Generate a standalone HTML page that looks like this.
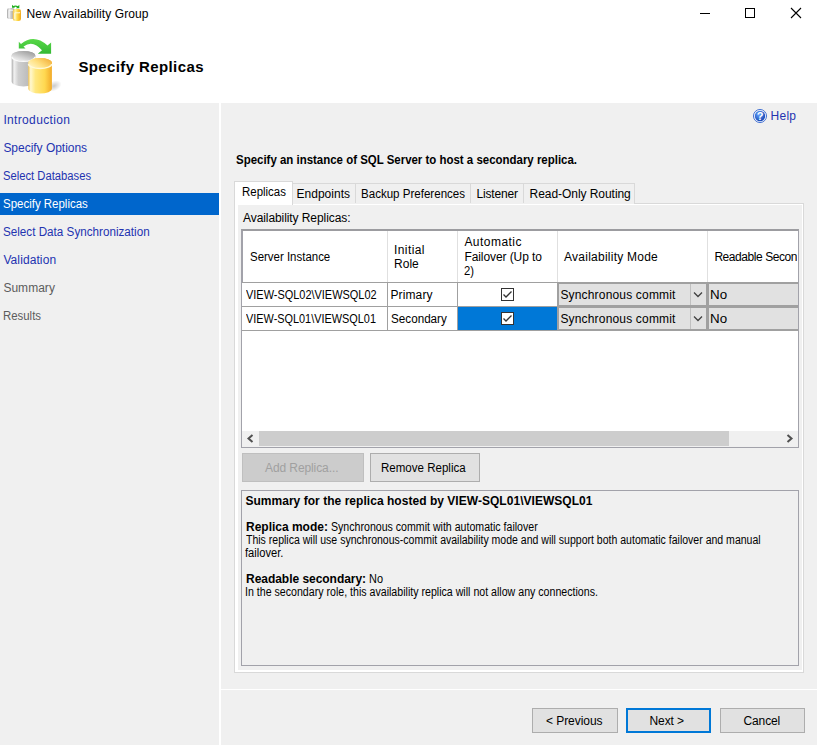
<!DOCTYPE html>
<html><head><meta charset="utf-8">
<style>
html,body{margin:0;padding:0;}
body{width:820px;height:749px;position:relative;overflow:hidden;background:#fff;font-family:"Liberation Sans",sans-serif;color:#000;}
.t{position:absolute;white-space:nowrap;}
.r{position:absolute;box-sizing:border-box;}
</style></head><body>
<!-- left nav panel -->
<div class="r" style="left:0;top:103px;width:219px;height:642px;background:#f0f0f0"></div>
<div class="r" style="left:0;top:193px;width:219px;height:22px;background:#0066cc"></div>
<!-- right panel -->
<div class="r" style="left:221px;top:103px;width:596px;height:586px;background:#f0f0f0"></div>
<div class="r" style="left:221px;top:690px;width:596px;height:55px;background:#f0f0f0"></div>
<!-- tab control page -->
<div class="r" style="left:234px;top:203px;width:570px;height:470px;border:1px solid #d9d9d9;background:#fff"></div>
<div class="r" style="left:238px;top:205px;width:564px;height:465px;background:#f0f0f0"></div>
<!-- inactive tabs -->
<div class="r" style="left:292px;top:183px;width:343px;height:21px;border:1px solid #d9d9d9;border-bottom:none;background:#f0f0f0"></div>
<div class="r" style="left:355px;top:184px;width:1px;height:19px;background:#d9d9d9"></div>
<div class="r" style="left:470px;top:184px;width:1px;height:19px;background:#d9d9d9"></div>
<div class="r" style="left:523px;top:184px;width:1px;height:19px;background:#d9d9d9"></div>
<!-- active tab -->
<div class="r" style="left:234px;top:181px;width:59px;height:24px;border:1px solid #d9d9d9;border-bottom:none;background:#fff"></div>
<!-- grid -->
<div class="r" style="left:241px;top:229px;width:558px;height:219px;border:1px solid #a2a2aa;border-top:2px solid #9c9ca0;background:#fff"></div>
<div class="r" style="left:242px;top:231px;width:1px;height:51px;background:#a2a2aa"></div>
<!-- header col separators -->
<div class="r" style="left:387px;top:231px;width:1px;height:51px;background:#e0e0e0"></div>
<div class="r" style="left:457px;top:231px;width:1px;height:51px;background:#e0e0e0"></div>
<div class="r" style="left:557px;top:231px;width:1px;height:51px;background:#e0e0e0"></div>
<div class="r" style="left:707px;top:231px;width:1px;height:51px;background:#e0e0e0"></div>
<div class="r" style="left:387px;top:282px;width:1px;height:49px;background:#a0a0a0"></div>
<div class="r" style="left:457px;top:282px;width:1px;height:49px;background:#a0a0a0"></div>
<div class="r" style="left:242px;top:282px;width:556px;height:1px;background:#a0a0a0"></div>
<div class="r" style="left:242px;top:306px;width:316px;height:1px;background:#a0a0a0"></div>
<div class="r" style="left:242px;top:330px;width:556px;height:1px;background:#a0a0a0"></div>
<!-- selected cell -->
<div class="r" style="left:458px;top:307px;width:99px;height:23px;background:#0078d7"></div>
<!-- combo cells -->
<div class="r" style="left:557px;top:282px;width:241px;height:49px;background:#a0a0a0"></div>
<div class="r" style="left:559px;top:284px;width:147px;height:21px;background:#e1e1e1"></div>
<div class="r" style="left:709px;top:284px;width:89px;height:21px;background:#e1e1e1"></div>
<div class="r" style="left:559px;top:308px;width:147px;height:21px;background:#e1e1e1"></div>
<div class="r" style="left:709px;top:308px;width:89px;height:21px;background:#e1e1e1"></div>
<div class="r" style="left:690px;top:284px;width:1px;height:21px;background:#c0c0c0"></div>
<div class="r" style="left:690px;top:308px;width:1px;height:21px;background:#c0c0c0"></div>
<svg class="r" style="left:693px;top:291px" width="10" height="7"><path d="M1 1.5 L5 5.5 L9 1.5" fill="none" stroke="#404040" stroke-width="1.3"/></svg>
<svg class="r" style="left:693px;top:315px" width="10" height="7"><path d="M1 1.5 L5 5.5 L9 1.5" fill="none" stroke="#404040" stroke-width="1.3"/></svg>
<!-- checkboxes -->
<div class="r" style="left:501px;top:288px;width:13px;height:13px;border:1px solid #333;background:#fff"></div>
<svg class="r" style="left:503px;top:291px" width="9" height="7"><path d="M0.5 3.5 L3 6 L8.5 0.5" fill="none" stroke="#333" stroke-width="1.3"/></svg>
<div class="r" style="left:501px;top:312px;width:13px;height:13px;border:1px solid #333;background:#fff"></div>
<svg class="r" style="left:503px;top:315px" width="9" height="7"><path d="M0.5 3.5 L3 6 L8.5 0.5" fill="none" stroke="#333" stroke-width="1.3"/></svg>
<!-- scrollbar -->
<div class="r" style="left:242px;top:431px;width:556px;height:16px;background:#f0f0f0"></div>
<div class="r" style="left:259px;top:431px;width:470px;height:15px;background:#cdcdcd"></div>
<svg class="r" style="left:246px;top:434px" width="9" height="10"><path d="M6.5 1 L2.5 4.5 L6.5 8" fill="none" stroke="#505050" stroke-width="2"/></svg>
<svg class="r" style="left:785px;top:434px" width="9" height="10"><path d="M2.5 1 L6.5 4.5 L2.5 8" fill="none" stroke="#505050" stroke-width="2"/></svg>
<!-- buttons -->
<div class="r" style="left:242px;top:453px;width:122px;height:29px;border:1px solid #bfbfbf;background:#cccccc"></div>
<div class="r" style="left:370px;top:453px;width:110px;height:29px;border:1px solid #adadad;background:#e1e1e1"></div>
<!-- summary box -->
<div class="r" style="left:241px;top:490px;width:558px;height:176px;border:1px solid #a2a2aa;background:#f0f0f0"></div>
<!-- bottom buttons -->
<div class="r" style="left:532px;top:708px;width:86px;height:25px;border:1px solid #adadad;background:#e1e1e1"></div>
<div class="r" style="left:626px;top:708px;width:85px;height:25px;border:2px solid #0078d7;background:#e1e1e1"></div>
<div class="r" style="left:720px;top:708px;width:85px;height:25px;border:1px solid #adadad;background:#e1e1e1"></div>
<!-- window buttons -->
<div class="r" style="left:700px;top:13px;width:10px;height:1px;background:#000"></div>
<div class="r" style="left:745px;top:8px;width:10px;height:10px;border:1px solid #000"></div>
<svg class="r" style="left:790px;top:7px" width="12" height="12"><path d="M1 1 L11 11 M11 1 L1 11" stroke="#000" stroke-width="1.1"/></svg>
<!-- help icon -->
<svg class="r" style="left:753px;top:109px" width="14" height="14" viewBox="0 0 14 14">
<defs><radialGradient id="hg" cx="0.4" cy="0.35" r="0.7"><stop offset="0" stop-color="#6aa8ff"/><stop offset="1" stop-color="#1040b0"/></radialGradient></defs>
<circle cx="7" cy="7" r="6.5" fill="#fff" stroke="#3a6ad0" stroke-width="1"/>
<circle cx="7" cy="7" r="5.2" fill="url(#hg)"/>
<text x="7" y="11" text-anchor="middle" font-family="Liberation Sans" font-weight="bold" font-size="11" fill="#fff">?</text>
</svg>
<svg class="r" style="left:4px;top:2px" width="22" height="22" viewBox="0 0 22 22">
<defs>
<linearGradient id="sg1" x1="0" x2="1"><stop offset="0" stop-color="#a8a8a8"/><stop offset="0.3" stop-color="#e8e8e8"/><stop offset="0.6" stop-color="#c4c4c4"/><stop offset="1" stop-color="#9c9c9c"/></linearGradient>
<linearGradient id="sy1" x1="0" x2="1"><stop offset="0" stop-color="#f6c040"/><stop offset="0.3" stop-color="#fff2a0"/><stop offset="0.6" stop-color="#ffd640"/><stop offset="1" stop-color="#f0a820"/></linearGradient>
</defs>
<rect x="3" y="6" width="7.6" height="11" rx="2.5" ry="1.8" fill="url(#sg1)"/>
<path d="M5 15.5 L5 8.2 L9 8.2" fill="none" stroke="#f8f8f8" stroke-width="1"/>
<rect x="8.8" y="7" width="8.2" height="12" rx="2.5" ry="2" fill="url(#sy1)"/>
<path d="M10.8 17 L10.8 10.8 L15.8 10.8" fill="none" stroke="#fffbe0" stroke-width="1"/>
<path d="M15.5 10.8 L16 9.8" stroke="#fffbe0" stroke-width="0.8"/>
<path d="M8 2.8 L8 5.8 L11 5.8 Z M15.3 2.8 L15.3 6.2 L11.9 6.2 Z" fill="#20b020"/>
<path d="M9 4.8 Q11.5 3.4 14.2 5" stroke="#20b020" stroke-width="1.3" fill="none"/>
</svg><svg class="r" style="left:8px;top:36px" width="54" height="62" viewBox="0 0 54 62">
<defs>
<linearGradient id="bg1" x1="0" x2="1"><stop offset="0" stop-color="#a8a8a8"/><stop offset="0.1" stop-color="#f2f2f2"/><stop offset="0.28" stop-color="#cfcfcf"/><stop offset="0.7" stop-color="#bcbcbc"/><stop offset="1" stop-color="#9a9a9a"/></linearGradient>
<linearGradient id="bt1" x1="0.2" x2="0.8" y1="0.8" y2="0"><stop offset="0" stop-color="#e8e8e8"/><stop offset="0.5" stop-color="#c0c0c0"/><stop offset="1" stop-color="#9a9a9a"/></linearGradient>
<linearGradient id="by1" x1="0" x2="1"><stop offset="0" stop-color="#f8c850"/><stop offset="0.1" stop-color="#fff8d0"/><stop offset="0.3" stop-color="#ffe880"/><stop offset="0.7" stop-color="#ffd850"/><stop offset="1" stop-color="#f2aa28"/></linearGradient>
<linearGradient id="byt" x1="0" x2="1" y1="0.8" y2="0.2"><stop offset="0" stop-color="#fff6c8"/><stop offset="0.45" stop-color="#ffe080"/><stop offset="1" stop-color="#f2ae38"/></linearGradient>
<linearGradient id="ga" x1="0" x2="0" y1="0" y2="1"><stop offset="0" stop-color="#58d848"/><stop offset="1" stop-color="#34b834"/></linearGradient>
<radialGradient id="sh" cx="0.5" cy="0.5" r="0.5"><stop offset="0" stop-color="#000" stop-opacity="0.3"/><stop offset="1" stop-color="#000" stop-opacity="0"/></radialGradient>
</defs>
<ellipse cx="46" cy="50" rx="8" ry="5" fill="url(#sh)" opacity="0.7" transform="rotate(-25 46 50)"/>
<path d="M3.7 19.9 A11.8 5 0 0 1 27.3 19.9 L27.3 45.5 A11.8 5 0 0 1 3.7 45.5 Z" fill="url(#bg1)"/>
<ellipse cx="15.5" cy="19.9" rx="11.8" ry="5" fill="url(#bt1)"/>
<path d="M3.9 20.8 A11.6 4.6 0 0 0 27.1 20.8" fill="none" stroke="#fafafa" stroke-width="1.4"/>
<path d="M20.3 27 A11.8 5 0 0 1 43.9 27 L43.9 52.6 A11.8 5 0 0 1 20.3 52.6 Z" fill="url(#by1)"/>
<ellipse cx="32.1" cy="27" rx="11.8" ry="5" fill="url(#byt)"/>
<path d="M20.5 27.9 A11.6 4.6 0 0 0 43.7 27.9" fill="none" stroke="#fff8d8" stroke-width="1.4"/>
<path d="M10.8 5.8 L10.8 12.4 L17.5 12.4 L15.5 10.4 Q25 3.5 34 14.3 L29.8 17.8 L43.1 17.8 L43.1 6.6 L39.5 9.6 Q26 -2.5 13 8 Z" fill="url(#ga)"/>
</svg>
<div class="t" style="left:26.5px;top:8px;font-size:12px;line-height:12px;letter-spacing:0.103px;">New Availability Group</div>
<div class="t" style="left:78.4px;top:59px;font-size:15px;line-height:15px;font-weight:bold;letter-spacing:0.391px;">Specify Replicas</div>
<div class="t" style="left:3.4px;top:114px;font-size:12px;line-height:12px;color:#2333b0;letter-spacing:0.344px;">Introduction</div>
<div class="t" style="left:3.4px;top:142px;font-size:12px;line-height:12px;color:#2333b0;letter-spacing:-0.025px;">Specify Options</div>
<div class="t" style="left:3.4px;top:170px;font-size:12px;line-height:12px;color:#2333b0;transform:scaleX(0.9356);transform-origin:0 0;">Select Databases</div>
<div class="t" style="left:3.4px;top:198px;font-size:12px;line-height:12px;color:#ffffff;transform:scaleX(0.9562);transform-origin:0 0;">Specify Replicas</div>
<div class="t" style="left:3.4px;top:226px;font-size:12px;line-height:12px;color:#2333b0;transform:scaleX(0.9729);transform-origin:0 0;">Select Data Synchronization</div>
<div class="t" style="left:3.4px;top:254px;font-size:12px;line-height:12px;color:#2333b0;letter-spacing:0.097px;">Validation</div>
<div class="t" style="left:3.4px;top:282px;font-size:12px;line-height:12px;color:#5c5c5c;letter-spacing:0.026px;">Summary</div>
<div class="t" style="left:3.4px;top:310px;font-size:12px;line-height:12px;color:#5c5c5c;transform:scaleX(0.9503);transform-origin:0 0;">Results</div>
<div class="t" style="left:770.5px;top:110px;font-size:12px;line-height:12px;color:#2333b0;letter-spacing:0.271px;">Help</div>
<div class="t" style="left:236.4px;top:154px;font-size:12px;line-height:12px;font-weight:bold;transform:scaleX(0.9546);transform-origin:0 0;">Specify an instance of SQL Server to host a secondary replica.</div>
<div class="t" style="left:241.5px;top:186px;font-size:12px;line-height:12px;transform:scaleX(0.9544);transform-origin:0 0;">Replicas</div>
<div class="t" style="left:296.5px;top:188px;font-size:12px;line-height:12px;letter-spacing:0.016px;">Endpoints</div>
<div class="t" style="left:361.4px;top:188px;font-size:12px;line-height:12px;transform:scaleX(0.9628);transform-origin:0 0;">Backup Preferences</div>
<div class="t" style="left:476.4px;top:188px;font-size:12px;line-height:12px;letter-spacing:-0.143px;">Listener</div>
<div class="t" style="left:529.6px;top:188px;font-size:12px;line-height:12px;letter-spacing:-0.054px;">Read-Only Routing</div>
<div class="t" style="left:243.0px;top:212px;font-size:12px;line-height:12px;letter-spacing:-0.080px;">Availability Replicas:</div>
<div class="t" style="left:250.2px;top:251px;font-size:12px;line-height:12px;transform:scaleX(0.9546);transform-origin:0 0;">Server Instance</div>
<div class="t" style="left:394.1px;top:244px;font-size:12px;line-height:12px;letter-spacing:0.381px;">Initial</div>
<div class="t" style="left:394.1px;top:258px;font-size:12px;line-height:12px;">Role</div>
<div class="t" style="left:464.4px;top:236px;font-size:12px;line-height:12px;letter-spacing:0.468px;">Automatic</div>
<div class="t" style="left:464.4px;top:251px;font-size:12px;line-height:12px;letter-spacing:-0.079px;">Failover (Up to</div>
<div class="t" style="left:464.4px;top:265px;font-size:12px;line-height:12px;transform:scaleX(0.9376);transform-origin:0 0;">2)</div>
<div class="t" style="left:564.1px;top:251px;font-size:12px;line-height:12px;letter-spacing:0.242px;">Availability Mode</div>
<div class="t" style="left:714.4px;top:251px;font-size:12px;line-height:12px;letter-spacing:-0.433px;width:82.6px;overflow:hidden;">Readable Secon</div>
<div class="t" style="left:246.2px;top:289px;font-size:12px;line-height:12px;transform:scaleX(0.9120);transform-origin:0 0;">VIEW-SQL02\VIEWSQL02</div>
<div class="t" style="left:246.2px;top:313px;font-size:12px;line-height:12px;transform:scaleX(0.9077);transform-origin:0 0;">VIEW-SQL01\VIEWSQL01</div>
<div class="t" style="left:390.5px;top:289px;font-size:12px;line-height:12px;letter-spacing:0.109px;">Primary</div>
<div class="t" style="left:390.5px;top:313px;font-size:12px;line-height:12px;transform:scaleX(0.9736);transform-origin:0 0;">Secondary</div>
<div class="t" style="left:560.4px;top:289px;font-size:12px;line-height:12px;letter-spacing:0.174px;">Synchronous commit</div>
<div class="t" style="left:560.4px;top:313px;font-size:12px;line-height:12px;letter-spacing:0.174px;">Synchronous commit</div>
<div class="t" style="left:710.4px;top:289px;font-size:12px;line-height:12px;transform:scaleX(1.1124);transform-origin:0 0;">No</div>
<div class="t" style="left:710.4px;top:313px;font-size:12px;line-height:12px;transform:scaleX(1.1124);transform-origin:0 0;">No</div>
<div class="t" style="left:265.0px;top:462px;font-size:12px;line-height:12px;color:#a0a0a0;letter-spacing:-0.094px;">Add Replica...</div>
<div class="t" style="left:381.4px;top:462px;font-size:12px;line-height:12px;transform:scaleX(0.9613);transform-origin:0 0;">Remove Replica</div>
<div class="t" style="left:245.4px;top:495px;font-size:12px;line-height:12px;font-weight:bold;letter-spacing:0.036px;">Summary for the replica hosted by VIEW-SQL01\VIEWSQL01</div>
<div class="t" style="left:246.0px;top:521px;font-size:12px;line-height:12px;font-weight:bold;letter-spacing:-0.011px;">Replica mode:</div>
<div class="t" style="left:330.6px;top:521px;font-size:12px;line-height:12px;transform:scaleX(0.8831);transform-origin:0 0;">Synchronous commit with automatic failover</div>
<div class="t" style="left:246.2px;top:534px;font-size:12px;line-height:12px;transform:scaleX(0.8768);transform-origin:0 0;">This replica will use synchronous-commit availability mode and will support both automatic failover and manual</div>
<div class="t" style="left:245.0px;top:547px;font-size:12px;line-height:12px;transform:scaleX(0.9283);transform-origin:0 0;">failover.</div>
<div class="t" style="left:246.0px;top:573px;font-size:12px;line-height:12px;font-weight:bold;letter-spacing:-0.034px;">Readable secondary:</div>
<div class="t" style="left:369.4px;top:573px;font-size:12px;line-height:12px;transform:scaleX(0.9102);transform-origin:0 0;">No</div>
<div class="t" style="left:245.0px;top:586px;font-size:12px;line-height:12px;transform:scaleX(0.8848);transform-origin:0 0;">In the secondary role, this availability replica will not allow any connections.</div>
<div class="t" style="left:546.0px;top:715px;font-size:12px;line-height:12px;letter-spacing:-0.059px;">&lt; Previous</div>
<div class="t" style="left:649.5px;top:715px;font-size:12px;line-height:12px;letter-spacing:-0.103px;">Next &gt;</div>
<div class="t" style="left:743.4px;top:715px;font-size:12px;line-height:12px;letter-spacing:-0.092px;">Cancel</div>
</body></html>
